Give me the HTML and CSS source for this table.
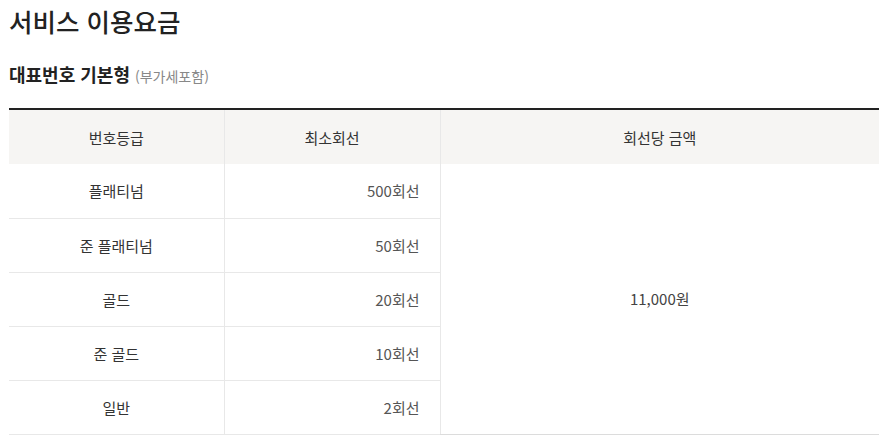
FILE: index.html
```html
<!DOCTYPE html>
<html lang="ko">
<head>
<meta charset="utf-8">
<link rel="stylesheet" href="styles.css">
</head>
<body>
<div class="page">
  <h1 class="title">서비스 이용요금</h1>
  <h2 class="subtitle">대표번호 기본형 <span class="note">(부가세포함)</span></h2>
  <table class="price">
    <colgroup>
      <col class="c1"><col class="c2"><col class="c3">
    </colgroup>
    <thead>
      <tr><th>번호등급</th><th>최소회선</th><th class="last">회선당 금액</th></tr>
    </thead>
    <tbody>
      <tr><td>플래티넘</td><td class="num">500회선</td><td class="price-cell" rowspan="5">11,000원</td></tr>
      <tr><td>준 플래티넘</td><td class="num">50회선</td></tr>
      <tr><td>골드</td><td class="num">20회선</td></tr>
      <tr><td>준 골드</td><td class="num">10회선</td></tr>
      <tr><td>일반</td><td class="num">2회선</td></tr>
    </tbody>
  </table>
</div>
</body>
</html>
```

FILE: styles.css
```css
* { box-sizing: border-box; }
html, body { margin: 0; padding: 0; background: #fff; }
body {
  font-family: "Noto Sans CJK KR", "Noto Sans", sans-serif;
  color: #222;
}
.page { padding: 0 5px 0 9px; }
.title {
  margin: 3px 0 0;
  font-size: 25.5px;
  line-height: 36px;
  font-weight: 500;
  color: #222;
}
.subtitle {
  margin: 23px 0 20px;
  font-size: 18px;
  line-height: 24px;
  font-weight: 700;
  color: #222;
}
.note {
  font-size: 14px;
  font-weight: 400;
  color: #888;
}
.price {
  width: 870px;
  border-collapse: collapse;
  table-layout: fixed;
  border-top: 2px solid #222;
  border-bottom: 1px solid #dcdcdc;
  font-size: 15px;
}
.c1 { width: 215px; }
.c2 { width: 216px; }
.c3 { width: 439px; }
.price th {
  height: 55px;
  background: #f6f5f3;
  font-weight: 400;
  color: #333;
  border-right: 1px solid #e8e8e8;
  padding: 0;
}
.price th.last { border-right: none; }
.price td {
  height: 54px;
  padding: 0;
  text-align: center;
  color: #333;
  border-right: 1px solid #e8e8e8;
  border-bottom: 1px solid #e8e8e8;
}
.price td.num {
  text-align: right;
  padding-right: 20px;
  color: #555;
}
.price td.price-cell {
  border-right: none;
  border-bottom: 1px solid #dcdcdc;
  color: #444;
}
```
